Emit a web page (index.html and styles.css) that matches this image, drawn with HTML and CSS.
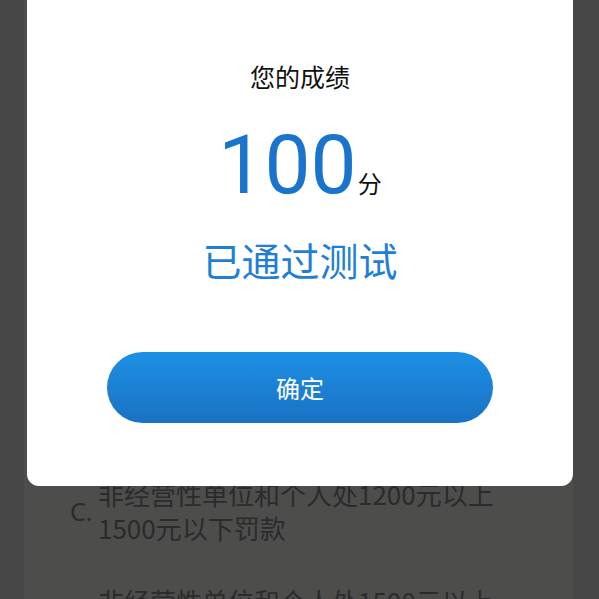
FILE: index.html
```html
<!DOCTYPE html>
<html lang="zh-CN">
<head>
<meta charset="utf-8">
<title>测试结果</title>
<link rel="stylesheet" href="styles.css">
</head>
<body>
<div class="page">
  <div class="list">
    <div class="option">
      <span class="opt-label">C.</span>
      <span class="opt-text">非经营性单位和个人处1200元以上<br>1500元以下罚款</span>
    </div>
    <div class="option">
      <span class="opt-label">D.</span>
      <span class="opt-text">非经营性单位和个人处1500元以上<br>2000元以下罚款</span>
    </div>
  </div>
</div>
<div class="dialog">
  <div class="title">您的成绩</div>
  <div class="score-row">
    <span class="score">100</span><span class="unit">分</span>
  </div>
  <div class="status">已通过测试</div>
  <button class="confirm">确定</button>
</div>
</body>
</html>
```
FILE: styles.css
```css
html, body {
  margin: 0;
  padding: 0;
}
body {
  width: 599px;
  height: 599px;
  overflow: hidden;
  background: #474747;
  font-family: "Noto Sans CJK SC", "Noto Sans", sans-serif;
  position: relative;
}
.page {
  margin: 0 26px 0 24px;
  height: 599px;
  background: #4d4e4c;
}
.list {
  padding-top: 477px;
  display: flex;
  flex-direction: column;
  gap: 39px;
}
.option {
  display: flex;
  align-items: center;
  padding-left: 46px;
  color: #2b2b2b;
}
.opt-label {
  width: 28px;
  font-size: 25px;
  font-family: "Noto Sans", "Noto Sans CJK SC", sans-serif;
}
.opt-text {
  font-size: 26px;
  line-height: 34px;
}
.dialog {
  position: absolute;
  left: 27px;
  top: -20px;
  width: 546px;
  height: 506px;
  box-sizing: border-box;
  padding-top: 81px;
  background: #ffffff;
  border-radius: 12px;
  display: flex;
  flex-direction: column;
  align-items: center;
}
.title {
  font-size: 25px;
  line-height: 30px;
  color: #111111;
}
.score-row {
  margin-top: 32px;
  display: flex;
  align-items: baseline;
  padding-left: 0;
}
.score {
  font-family: Roboto, "Noto Sans", sans-serif;
  font-size: 82px;
  line-height: 84px;
  color: #1a74cd;
}
.unit {
  font-size: 24px;
  line-height: 30px;
  color: #111111;
  margin-left: 1px;
}
.status {
  margin-top: 28px;
  font-size: 39px;
  line-height: 48px;
  color: #1f7fd6;
}
.confirm {
  margin-top: 69px;
  width: 386px;
  height: 71px;
  border: none;
  border-radius: 36px;
  background: linear-gradient(to bottom, #1d90e5, #1a71c3);
  color: #ffffff;
  font-family: "Noto Sans CJK SC", sans-serif;
  font-size: 24px;
  padding: 0;
}
```
